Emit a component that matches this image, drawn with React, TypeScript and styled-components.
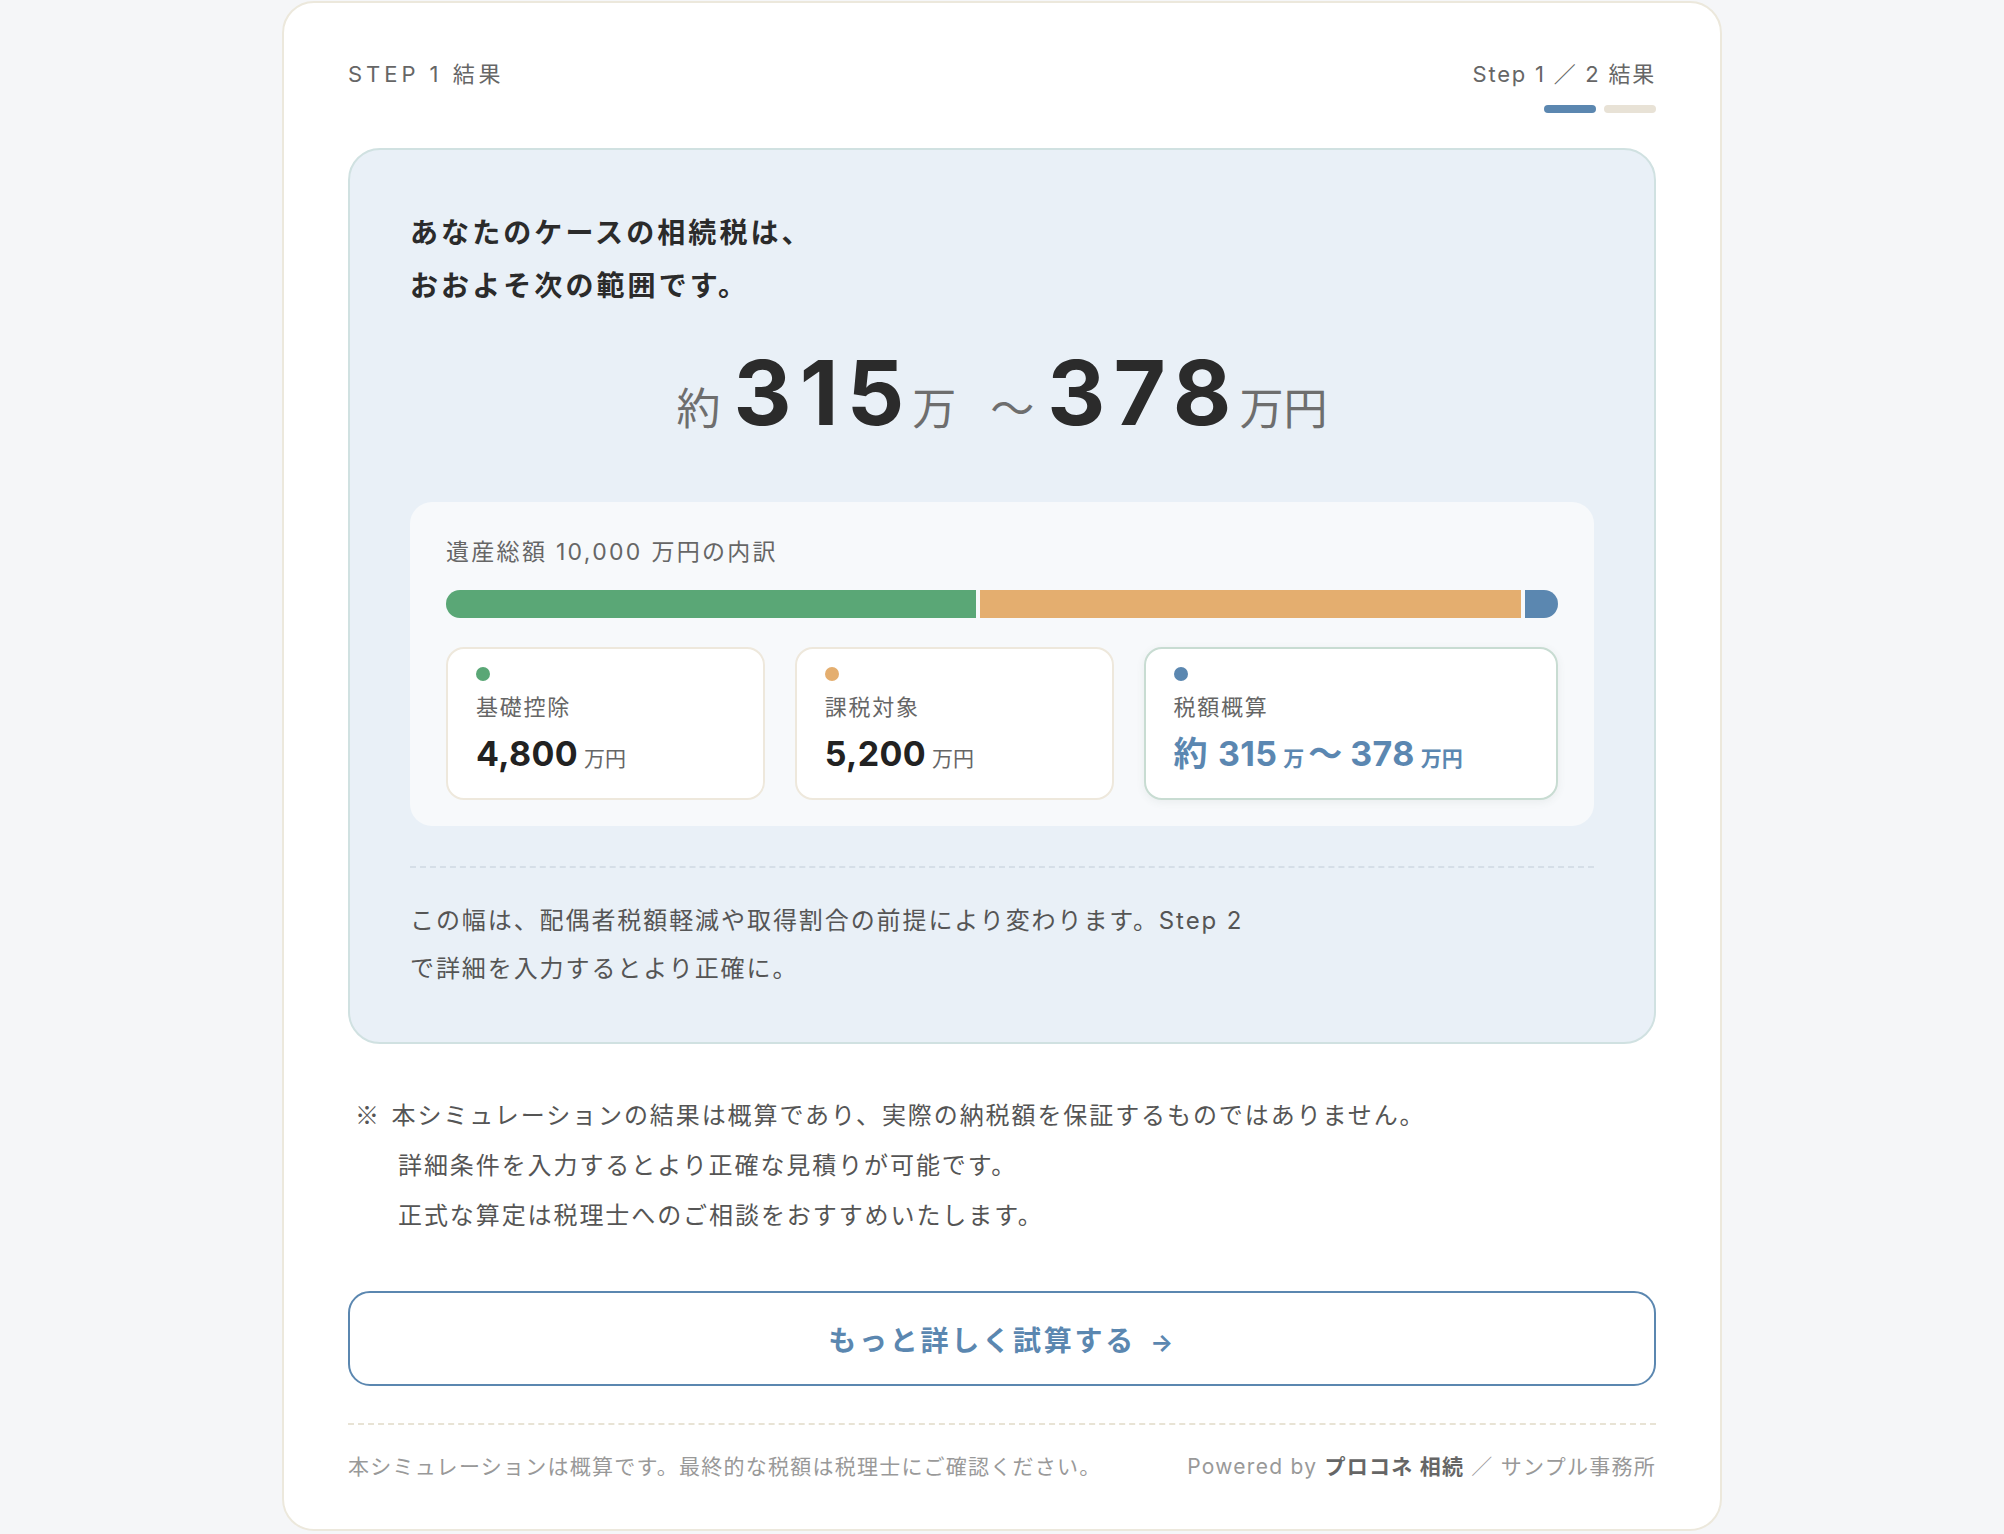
import React from "react";
import styled, { createGlobalStyle } from "styled-components";

const GlobalStyle = createGlobalStyle`
  html, body {
    margin: 0;
    padding: 0;
    background: #f5f6f8;
  }
  body {
    font-family: "Inter", "Noto Sans CJK JP", sans-serif;
    color: #333;
  }
`;

const Page = styled.div`
  display: flex;
  justify-content: center;
  padding-top: 1px;
`;

const Card = styled.div`
  width: 1440px;
  box-sizing: border-box;
  background: #fff;
  border: 2px solid #ece8dc;
  border-radius: 32px;
  padding: 55px 64px 46px;
`;

const Header = styled.div`
  display: flex;
  justify-content: space-between;
  align-items: flex-start;
`;

const StepLabel = styled.div<{ $spacing?: number }>`
  font-size: 22px;
  line-height: 33px;
  letter-spacing: ${(p) => p.$spacing ?? 0.18}em;
  color: #666;
`;

const StepRight = styled.div`
  display: flex;
  flex-direction: column;
  align-items: flex-end;
`;

const Dots = styled.div`
  display: flex;
  gap: 8px;
  margin-top: 14px;
`;

const Pip = styled.span<{ $active?: boolean }>`
  width: 52px;
  height: 8px;
  border-radius: 4px;
  background: ${(p) => (p.$active ? "#5b87b0" : "#e8e2d6")};
`;

const Panel = styled.section`
  margin-top: 35px;
  background: #e9f0f7;
  border: 2px solid #d0e1e1;
  border-radius: 32px;
  padding: 57px 60px 49px;
`;

const Lead = styled.h2`
  margin: 0;
  font-size: 28px;
  line-height: 53px;
  font-weight: 700;
  letter-spacing: 0.11em;
  color: #2b2b2b;
`;

const Range = styled.div`
  margin-top: 26px;
  display: flex;
  justify-content: center;
  align-items: baseline;
  line-height: 108px;
`;

const Unit = styled.span`
  font-size: 44px;
  color: #6e6e6e;
`;

const BigNum = styled.span`
  font-size: 90px;
  font-weight: 700;
  letter-spacing: 0.09em;
  color: #2b2b2b;
  margin-left: 13px;
`;

const Tilde = styled.span`
  font-size: 44px;
  color: #6e6e6e;
  margin-left: 34px;
`;

const Breakdown = styled.div`
  margin-top: 39px;
  background: #f7f9fb;
  border-radius: 22px;
  padding: 34px 36px 26px;
`;

const BreakdownTitle = styled.div`
  font-size: 23px;
  line-height: 33px;
  letter-spacing: 0.1em;
  color: #666;
`;

const Bar = styled.div`
  margin-top: 21px;
  height: 28px;
  display: flex;
  gap: 4px;
  border-radius: 14px;
  overflow: hidden;
`;

const Segment = styled.div<{ $color: string }>`
  background: ${(p) => p.$color};
  height: 100%;
`;

const Tiles = styled.div`
  margin-top: 29px;
  display: grid;
  grid-template-columns: 1fr 1fr 1.3fr;
  gap: 30px;
`;

const Tile = styled.div<{ $accent?: boolean }>`
  background: #fff;
  border: 2px solid ${(p) => (p.$accent ? "#c8dcd2" : "#eee8dc")};
  border-radius: 18px;
  padding: 18px 28px 17px;
  box-shadow: ${(p) => (p.$accent ? "0 2px 8px rgba(60, 90, 80, 0.08)" : "none")};
`;

const Dot = styled.span<{ $color: string }>`
  display: block;
  width: 14px;
  height: 14px;
  border-radius: 50%;
  background: ${(p) => p.$color};
`;

const TileLabel = styled.div`
  margin-top: 10px;
  font-size: 22px;
  line-height: 33px;
  letter-spacing: 0.08em;
  color: #666;
`;

const TileValue = styled.div<{ $blue?: boolean }>`
  margin-top: 8px;
  display: flex;
  align-items: baseline;
  line-height: 44px;
  color: ${(p) => (p.$blue ? "#5b87b1" : "#222")};
`;

const ValueNum = styled.span<{ $gap?: number }>`
  font-size: 34px;
  font-weight: 700;
  letter-spacing: 0.01em;
  margin-left: ${(p) => p.$gap ?? 0}px;
`;

const ValueUnit = styled.span<{ $blue?: boolean }>`
  font-size: 21px;
  margin-left: 6px;
  color: ${(p) => (p.$blue ? "#5b87b1" : "#666")};
  font-weight: ${(p) => (p.$blue ? 700 : 400)};
`;

const ValueTilde = styled.span`
  font-size: 34px;
  font-weight: 700;
  margin-left: 4px;
`;

const Divider = styled.hr<{ $color: string }>`
  border: none;
  border-top: 2px dashed ${(p) => p.$color};
  margin: 0;
`;

const PanelDivider = styled(Divider)`
  margin-top: 40px;
`;

const Note = styled.p`
  margin: 29px 0 0;
  max-width: 860px;
  font-size: 24px;
  line-height: 48px;
  letter-spacing: 0.08em;
  color: #555;
`;

const Disclaimer = styled.div`
  margin-top: 45px;
  padding-left: 7px;
  font-size: 24px;
  line-height: 50px;
  letter-spacing: 0.08em;
  color: #555;
`;

const Mark = styled.span`
  font-family: "Noto Sans CJK JP", sans-serif;
  margin-right: 2px;
`;

const DisclaimerLine = styled.div<{ $indent?: boolean }>`
  padding-left: ${(p) => (p.$indent ? 43 : 0)}px;
`;

const CtaButton = styled.button`
  margin-top: 50px;
  width: 100%;
  height: 95px;
  background: #fff;
  border: 2px solid #5b87b0;
  border-radius: 22px;
  font-family: inherit;
  font-size: 28px;
  font-weight: 700;
  letter-spacing: 0.1em;
  color: #5b87b0;
  cursor: pointer;
`;

const Arrow = styled.span`
  font-size: 24px;
  margin-left: 14px;
`;

const FooterDivider = styled(Divider)`
  margin-top: 37px;
`;

const Footer = styled.div`
  margin-top: 26px;
  display: flex;
  justify-content: space-between;
  font-size: 21px;
  line-height: 32px;
  letter-spacing: 0.06em;
  color: #999;
`;

const Strong = styled.b`
  color: #666;
  font-weight: 700;
`;

export default function App() {
  const colors = { green: "#5aa776", orange: "#e4ae6f", blue: "#5b87b0" };
  const segments = [
    { color: colors.green, share: 530 },
    { color: colors.orange, share: 540 },
    { color: colors.blue, share: 33 },
  ];

  return (
    <>
      <GlobalStyle />
      <Page>
        <Card>
          <Header>
            <StepLabel>STEP 1 結果</StepLabel>
            <StepRight>
              <StepLabel $spacing={0.08}>Step 1 ／ 2 結果</StepLabel>
              <Dots>
                <Pip $active />
                <Pip />
              </Dots>
            </StepRight>
          </Header>

          <Panel>
            <Lead>
              あなたのケースの相続税は、
              <br />
              おおよそ次の範囲です。
            </Lead>

            <Range>
              <Unit>約</Unit>
              <BigNum>315</BigNum>
              <Unit>万</Unit>
              <Tilde>〜</Tilde>
              <BigNum>378</BigNum>
              <Unit>万円</Unit>
            </Range>

            <Breakdown>
              <BreakdownTitle>遺産総額 10,000 万円の内訳</BreakdownTitle>
              <Bar>
                {segments.map((s, i) => (
                  <Segment key={i} $color={s.color} style={{ flex: s.share }} />
                ))}
              </Bar>
              <Tiles>
                <Tile>
                  <Dot $color={colors.green} />
                  <TileLabel>基礎控除</TileLabel>
                  <TileValue>
                    <ValueNum>4,800</ValueNum>
                    <ValueUnit>万円</ValueUnit>
                  </TileValue>
                </Tile>
                <Tile>
                  <Dot $color={colors.orange} />
                  <TileLabel>課税対象</TileLabel>
                  <TileValue>
                    <ValueNum>5,200</ValueNum>
                    <ValueUnit>万円</ValueUnit>
                  </TileValue>
                </Tile>
                <Tile $accent>
                  <Dot $color={colors.blue} />
                  <TileLabel>税額概算</TileLabel>
                  <TileValue $blue>
                    <ValueNum>約</ValueNum>
                    <ValueNum $gap={10}>315</ValueNum>
                    <ValueUnit $blue>万</ValueUnit>
                    <ValueTilde>〜</ValueTilde>
                    <ValueNum $gap={8}>378</ValueNum>
                    <ValueUnit $blue>万円</ValueUnit>
                  </TileValue>
                </Tile>
              </Tiles>
            </Breakdown>

            <PanelDivider $color="#d5dee7" />

            <Note>
              この幅は、配偶者税額軽減や取得割合の前提により変わります。Step 2
              で詳細を入力するとより正確に。
            </Note>
          </Panel>

          <Disclaimer>
            <DisclaimerLine>
              <Mark>※</Mark> 本シミュレーションの結果は概算であり、実際の納税額を保証するものではありません。
            </DisclaimerLine>
            <DisclaimerLine $indent>詳細条件を入力するとより正確な見積りが可能です。</DisclaimerLine>
            <DisclaimerLine $indent>正式な算定は税理士へのご相談をおすすめいたします。</DisclaimerLine>
          </Disclaimer>

          <CtaButton>
            もっと詳しく試算する<Arrow>→</Arrow>
          </CtaButton>

          <FooterDivider $color="#e8e3d5" />

          <Footer>
            <span>本シミュレーションは概算です。最終的な税額は税理士にご確認ください。</span>
            <span>
              Powered by <Strong>プロコネ 相続</Strong> ／ サンプル事務所
            </span>
          </Footer>
        </Card>
      </Page>
    </>
  );
}
